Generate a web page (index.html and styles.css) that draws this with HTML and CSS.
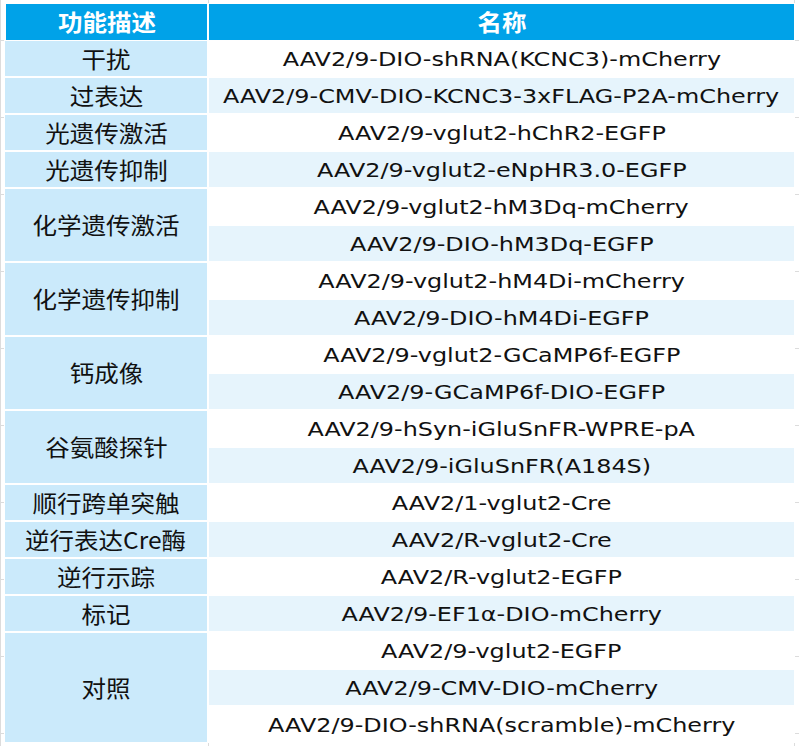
FILE: index.html
```html
<!DOCTYPE html>
<html lang="zh-CN">
<head>
<meta charset="utf-8">
<title>功能描述</title>
<link rel="stylesheet" href="styles.css">
</head>
<body>
<div class="sheet">
  <div class="table">
    <div class="head head-first"><span class="t">功能描述</span></div>
    <div class="head"><span class="t">名称</span></div>

    <div class="func"><span class="t">干扰</span></div>
    <div class="name"><span class="t">AAV2/9-DIO-shRNA(KCNC3)-mCherry</span></div>

    <div class="func"><span class="t">过表达</span></div>
    <div class="name alt"><span class="t">AAV2/9-CMV-DIO-KCNC3-3xFLAG-P2A-mCherry</span></div>

    <div class="func"><span class="t">光遗传激活</span></div>
    <div class="name"><span class="t">AAV2/9-vglut2-hChR2-EGFP</span></div>

    <div class="func"><span class="t">光遗传抑制</span></div>
    <div class="name alt"><span class="t">AAV2/9-vglut2-eNpHR3.0-EGFP</span></div>

    <div class="func span-2"><span class="t">化学遗传激活</span></div>
    <div class="name"><span class="t">AAV2/9-vglut2-hM3Dq-mCherry</span></div>
    <div class="name alt"><span class="t">AAV2/9-DIO-hM3Dq-EGFP</span></div>

    <div class="func span-2"><span class="t">化学遗传抑制</span></div>
    <div class="name"><span class="t">AAV2/9-vglut2-hM4Di-mCherry</span></div>
    <div class="name alt"><span class="t">AAV2/9-DIO-hM4Di-EGFP</span></div>

    <div class="func span-2"><span class="t">钙成像</span></div>
    <div class="name"><span class="t">AAV2/9-vglut2-GCaMP6f-EGFP</span></div>
    <div class="name alt"><span class="t">AAV2/9-GCaMP6f-DIO-EGFP</span></div>

    <div class="func span-2"><span class="t">谷氨酸探针</span></div>
    <div class="name"><span class="t">AAV2/9-hSyn-iGluSnFR-WPRE-pA</span></div>
    <div class="name alt"><span class="t">AAV2/9-iGluSnFR(A184S)</span></div>

    <div class="func"><span class="t">顺行跨单突触</span></div>
    <div class="name"><span class="t">AAV2/1-vglut2-Cre</span></div>

    <div class="func"><span class="t">逆行表达Cre酶</span></div>
    <div class="name alt"><span class="t">AAV2/R-vglut2-Cre</span></div>

    <div class="func"><span class="t">逆行示踪</span></div>
    <div class="name"><span class="t">AAV2/R-vglut2-EGFP</span></div>

    <div class="func"><span class="t">标记</span></div>
    <div class="name alt"><span class="t">AAV2/9-EF1α-DIO-mCherry</span></div>

    <div class="func span-3"><span class="t">对照</span></div>
    <div class="name"><span class="t">AAV2/9-vglut2-EGFP</span></div>
    <div class="name alt"><span class="t">AAV2/9-CMV-DIO-mCherry</span></div>
    <div class="name"><span class="t">AAV2/9-DIO-shRNA(scramble)-mCherry</span></div>
  </div>
</div>
</body>
</html>
```

FILE: styles.css
```css
html, body {
  margin: 0;
  padding: 0;
}

body {
  width: 799px;
  height: 746px;
  overflow: hidden;
  background-color: #ffffff;
  background-image:
    linear-gradient(to right, #dcdcdc 0, #dcdcdc 1px, transparent 1px),
    linear-gradient(to right, transparent 208px, #dcdcdc 208px, #dcdcdc 209px, transparent 209px),
    linear-gradient(to right, transparent 794px, #dcdcdc 794px, #dcdcdc 795px, transparent 795px),
    repeating-linear-gradient(to bottom, transparent 0, transparent 40px, #dcdcdc 40px, #dcdcdc 41px, transparent 41px, transparent 77px);
  font-family: "Noto Sans CJK SC", "DejaVu Sans", sans-serif;
  color: #111;
}

.sheet {
  padding: 4px 0 0 5px;
}

.table {
  display: grid;
  grid-template-columns: 202px 585px;
  grid-template-rows: 35px repeat(19, 35px);
  column-gap: 2px;
  row-gap: 2px;
  width: 789px;
  background: #ffffff;
  box-shadow: 0 0 0 1px #ffffff;
}

.t {
  display: inline-block;
  white-space: nowrap;
}

.head {
  margin-bottom: -1px;
  background: #00a2e8;
  color: #ffffff;
  font-family: "Noto Sans CJK SC", sans-serif;
  font-weight: 700;
  font-size: 23px;
  display: flex;
  align-items: center;
  justify-content: center;
}

.head .t {
  transform: translateY(-1px) scaleX(1.065);
}

.head-first {
  margin-left: 1px;
}

.func {
  grid-column: 1;
  background: #cbeafb;
  font-family: "Noto Sans CJK SC", sans-serif;
  font-size: 23px;
  display: flex;
  align-items: center;
  justify-content: center;
}

.func .t {
  transform: translateY(-1.5px) scaleX(1.065);
}

.span-2 {
  grid-row: span 2;
}

.span-3 {
  grid-row: span 3;
}

.name {
  grid-column: 2;
  background: #ffffff;
  font-family: "DejaVu Sans", sans-serif;
  font-size: 19.5px;
  display: flex;
  align-items: center;
  justify-content: center;
}

.name .t {
  transform: translateY(0.5px) scaleX(1.225);
}

.alt {
  background: #e6f4fc;
}
```
